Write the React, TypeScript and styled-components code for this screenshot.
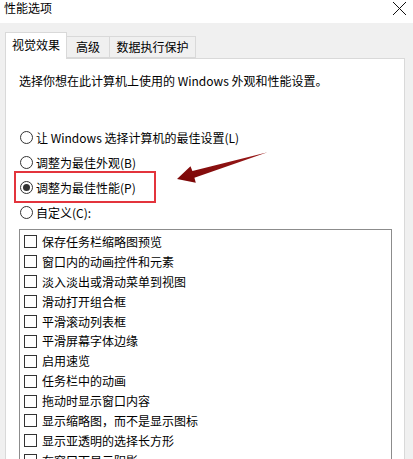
import React from "react";
import styled, { createGlobalStyle } from "styled-components";

const Global = createGlobalStyle`
  html, body { margin: 0; padding: 0; background: #f0f0f0; }
  body { font-family: "Noto Sans CJK SC", "Microsoft YaHei", sans-serif; font-size: 12px; color: #000; }
`;

const Window = styled.div`
  position: relative;
  width: 413px;
  height: 459px;
  overflow: hidden;
  background: #f0f0f0;
`;

const TitleBar = styled.div`
  height: 23px;
  background: #fff;
  display: flex;
  align-items: flex-start;
  justify-content: space-between;
  padding: 0 6px 0 4px;
  box-sizing: border-box;
`;

const Title = styled.div`
  font-size: 12px;
  line-height: 16px;
  margin-top: 0px;
  color: #000;
`;

const CloseIcon = styled.svg`
  width: 15px;
  height: 15px;
  margin-top: 1px;
`;

const TabStrip = styled.div`
  display: flex;
  align-items: flex-end;
  padding-left: 5px;
  margin-top: 9px;
  height: 26px;
  position: relative;
  z-index: 2;
`;

const Tab = styled.div<{ $active?: boolean; $w: number }>`
  box-sizing: border-box;
  width: ${(p) => p.$w}px;
  height: ${(p) => (p.$active ? 27 : 22)}px;
  margin-bottom: ${(p) => (p.$active ? -1 : 0)}px;
  background: ${(p) => (p.$active ? "#fff" : "#f0f0f0")};
  border: 1px solid #d9d9d9;
  border-bottom: ${(p) => (p.$active ? "none" : "1px solid #d9d9d9")};
  border-left: ${(p) => (p.$active ? "1px solid #d9d9d9" : "none")};
  display: flex;
  align-items: center;
  justify-content: center;
  font-size: 12px;
  line-height: 16px;
  padding-bottom: ${(p) => (p.$active ? 3 : 0)}px;
`;

const Panel = styled.div`
  position: relative;
  margin: 0 8px 0 5px;
  height: 420px;
  background: #fff;
  border: 1px solid #d9d9d9;
  box-sizing: border-box;
  padding: 0 12px 0 13px;
`;

const Description = styled.div`
  margin-top: 14px;
  line-height: 16px;
  font-size: 12px;
`;

const RadioGroup = styled.div`
  margin-top: 36px;
  display: flex;
  flex-direction: column;
`;

const RadioRow = styled.div`
  height: 25px;
  display: flex;
  align-items: center;
  gap: 3px;
  padding-left: 1px;
  line-height: 16px;
`;

const RadioCircle = styled.span<{ $checked?: boolean }>`
  box-sizing: border-box;
  width: 13px;
  height: 13px;
  border-radius: 50%;
  border: 1px solid #333;
  display: flex;
  align-items: center;
  justify-content: center;
  &::after {
    content: "";
    display: ${(p) => (p.$checked ? "block" : "none")};
    width: 7px;
    height: 7px;
    border-radius: 50%;
    background: #333;
  }
`;

const ListBox = styled.div`
  margin-top: 4px;
  margin-right: 0;
  width: 373px;
  border: 1px solid #8c8c8c;
  box-sizing: border-box;
  padding: 2px 0 0 4px;
  height: 260px;
`;

const CheckRow = styled.div`
  height: 19.9px;
  display: flex;
  align-items: center;
  gap: 5px;
  line-height: 16px;
`;

const CheckBox = styled.span`
  box-sizing: border-box;
  width: 13px;
  height: 13px;
  border: 1px solid #333;
  flex: none;
`;

const Highlight = styled.div`
  position: absolute;
  left: 8px;
  top: 112px;
  width: 142px;
  height: 32px;
  border: 2px solid #e3343c;
  box-sizing: border-box;
  pointer-events: none;
`;

const Arrow = styled.svg`
  position: absolute;
  left: 170px;
  top: 145px;
  width: 105px;
  height: 45px;
  pointer-events: none;
`;

const options = [
  { label: "让 Windows 选择计算机的最佳设置(L)" },
  { label: "调整为最佳外观(B)" },
  { label: "调整为最佳性能(P)", checked: true },
  { label: "自定义(C):" },
];

const effects = [
  "保存任务栏缩略图预览",
  "窗口内的动画控件和元素",
  "淡入淡出或滑动菜单到视图",
  "滑动打开组合框",
  "平滑滚动列表框",
  "平滑屏幕字体边缘",
  "启用速览",
  "任务栏中的动画",
  "拖动时显示窗口内容",
  "显示缩略图，而不是显示图标",
  "显示亚透明的选择长方形",
  "在窗口下显示阴影",
];

export default function App() {
  return (
    <>
      <Global />
      <Window>
        <TitleBar>
          <Title>性能选项</Title>
          <CloseIcon viewBox="0 0 15 15">
            <path d="M1 1 L14 14 M14 1 L1 14" stroke="#111" strokeWidth="1" fill="none" />
          </CloseIcon>
        </TitleBar>
        <TabStrip>
          <Tab $active $w={62}>视觉效果</Tab>
          <Tab $w={43}>高级</Tab>
          <Tab $w={86}>数据执行保护</Tab>
        </TabStrip>
        <Panel>
          <Description>选择你想在此计算机上使用的 Windows 外观和性能设置。</Description>
          <RadioGroup>
            {options.map((o) => (
              <RadioRow key={o.label}>
                <RadioCircle $checked={o.checked} />
                <span>{o.label}</span>
              </RadioRow>
            ))}
          </RadioGroup>
          <ListBox>
            {effects.map((e) => (
              <CheckRow key={e}>
                <CheckBox />
                <span>{e}</span>
              </CheckRow>
            ))}
          </ListBox>
          <Highlight />
        </Panel>
        <Arrow viewBox="170 145 105 45">
          <defs>
            <linearGradient id="ag" x1="0" y1="1" x2="1" y2="0">
              <stop offset="0" stopColor="#7a0606" />
              <stop offset="1" stopColor="#9a1a1a" />
            </linearGradient>
          </defs>
          <polygon
            points="177,179 190.5,166.2 192.4,171 267.5,152.3 194.4,177.7 195.8,182.8"
            fill="url(#ag)"
          />
        </Arrow>
      </Window>
    </>
  );
}
